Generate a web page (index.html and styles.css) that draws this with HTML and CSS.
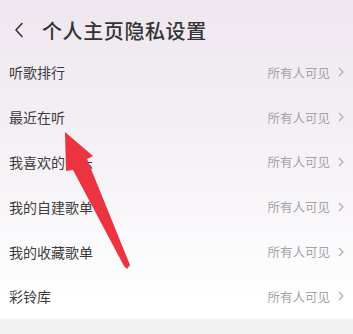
FILE: index.html
```html
<!DOCTYPE html>
<html lang="zh">
<head>
<meta charset="utf-8">
<link rel="stylesheet" href="styles.css">
</head>
<body>
<div class="page">
  <header class="header">
    <svg class="back" width="10" height="16" viewBox="0 0 10 16"><path d="M8 1.5 L2 8 L8 14.5" fill="none" stroke="#333" stroke-width="1.6" stroke-linecap="round" stroke-linejoin="round"/></svg>
    <h1 class="title">个人主页隐私设置</h1>
  </header>
  <ul class="list">
    <li class="row"><span class="label">听歌排行</span><span class="value">所有人可见</span><svg class="chev" width="6" height="10" viewBox="0 0 6 10"><path d="M1 1 L5 5 L1 9" fill="none" stroke="#aaa" stroke-width="1.1"/></svg></li>
    <li class="row"><span class="label">最近在听</span><span class="value">所有人可见</span><svg class="chev" width="6" height="10" viewBox="0 0 6 10"><path d="M1 1 L5 5 L1 9" fill="none" stroke="#aaa" stroke-width="1.1"/></svg></li>
    <li class="row"><span class="label">我喜欢的音乐</span><span class="value">所有人可见</span><svg class="chev" width="6" height="10" viewBox="0 0 6 10"><path d="M1 1 L5 5 L1 9" fill="none" stroke="#aaa" stroke-width="1.1"/></svg></li>
    <li class="row"><span class="label">我的自建歌单</span><span class="value">所有人可见</span><svg class="chev" width="6" height="10" viewBox="0 0 6 10"><path d="M1 1 L5 5 L1 9" fill="none" stroke="#aaa" stroke-width="1.1"/></svg></li>
    <li class="row"><span class="label">我的收藏歌单</span><span class="value">所有人可见</span><svg class="chev" width="6" height="10" viewBox="0 0 6 10"><path d="M1 1 L5 5 L1 9" fill="none" stroke="#aaa" stroke-width="1.1"/></svg></li>
    <li class="row"><span class="label">彩铃库</span><span class="value">所有人可见</span><svg class="chev" width="6" height="10" viewBox="0 0 6 10"><path d="M1 1 L5 5 L1 9" fill="none" stroke="#aaa" stroke-width="1.1"/></svg></li>
  </ul>
  <div class="footer"></div>
  <svg class="arrow" width="353" height="334" viewBox="0 0 353 334"><polygon points="65,132 93,156 87,159 130,265 127,269 124,266 73,170 66,171" fill="#ec3440"/></svg>
</div>
</body>
</html>
```
FILE: styles.css
```css
* { box-sizing: border-box; margin: 0; padding: 0; }
html, body { width: 353px; height: 334px; overflow: hidden; }
body {
  font-family: "Noto Sans CJK SC", "Noto Sans", sans-serif;
  background: #f2f2f2;
}
.page {
  position: relative;
  width: 353px;
  height: 334px;
  display: flex;
  flex-direction: column;
  background: linear-gradient(180deg, #efe7f0 0%, #f3eef4 35%, #f9f7fa 65%, #ffffff 90%);
}
.header {
  height: 50px;
  display: flex;
  align-items: center;
  padding: 10px 0 0 14px;
}
.back { margin-right: 18px; }
.title {
  font-size: 20px;
  font-weight: 500;
  color: #333;
  letter-spacing: 0.6px;
}
.list { list-style: none; }
.row {
  height: 44.8px;
  display: flex;
  align-items: center;
  padding: 0 9px 0 9px;
}
.label {
  flex: 1;
  font-size: 14px;
  color: #3c3c3c;
}
.value {
  font-size: 12.5px;
  color: #a3a3a3;
  margin-right: 8px;
}
.chev { display: block; }
.footer {
  flex: 1;
  background: #f2f2f2;
}
.arrow {
  position: absolute;
  left: 0;
  top: 0;
}
```
